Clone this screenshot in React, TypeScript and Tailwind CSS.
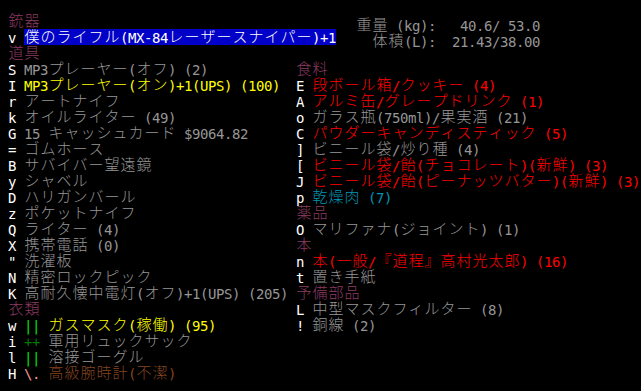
import React from "react";

// Cataclysm-style inventory screen, drawn on an 8px x 16px character grid
type Seg = [string, string];

const HDR = "text-[#8b3a62]";
const KEY = "text-white";
const GRY = "text-[#969696]";
const YEL = "text-[#ffff00]";
const RED = "text-[#ff0000]";
const CYN = "text-[#0096b4]";
const BRN = "text-[#84441f]";
const LGN = "text-[#00e600]";
const DGN = "text-[#007800]";
const PNK = "text-[#ff9696]";
const HL = "text-white bg-[#0000c8]";

const FULL = /[\u2E80-\u9FFF\uF900-\uFAFF\uFF01-\uFF60]/;

function Txt({ s, className }: { s: string; className: string }) {
  return (
    <span className={`flex ${className}`}>
      {Array.from(s).map((ch, i) =>
        FULL.test(ch) ? (
          <span key={i} className="inline-block w-4 h-4 shrink-0 text-center text-[15px] font-light leading-[17px]">
            {ch}
          </span>
        ) : (
          <span key={i} className="inline-block w-2 h-4 shrink-0 text-center text-[14px] leading-[18px]">
            {ch === " " ? "\u00a0" : ch}
          </span>
        )
      )}
    </span>
  );
}

function Row({ segs }: { segs: Seg[] }) {
  return (
    <div className="flex h-4 whitespace-nowrap">
      {segs.map(([s, c], i) => (
        <Txt key={i} s={s} className={c} />
      ))}
    </div>
  );
}

const left: Seg[][] = [
  [["銃器", HDR]],
  [["v ", KEY], ["僕のライフル(MX-84レーザースナイパー)+1", HL]],
  [["道具", HDR]],
  [["S ", KEY], ["MP3プレーヤー(オフ) (2)", GRY]],
  [["I ", KEY], ["MP3プレーヤー(オン)+1(UPS) (100)", YEL]],
  [["r ", KEY], ["アートナイフ", GRY]],
  [["k ", KEY], ["オイルライター (49)", GRY]],
  [["G ", KEY], ["15 キャッシュカード $9064.82", GRY]],
  [["= ", KEY], ["ゴムホース", GRY]],
  [["B ", KEY], ["サバイバー望遠鏡", GRY]],
  [["y ", KEY], ["シャベル", GRY]],
  [["D ", KEY], ["ハリガンバール", GRY]],
  [["z ", KEY], ["ポケットナイフ", GRY]],
  [["Q ", KEY], ["ライター (4)", GRY]],
  [["X ", KEY], ["携帯電話 (0)", GRY]],
  [['" ', KEY], ["洗濯板", GRY]],
  [["N ", KEY], ["精密ロックピック", GRY]],
  [["K ", KEY], ["高耐久懐中電灯(オフ)+1(UPS) (205)", GRY]],
  [["衣類", HDR]],
  [["w ", KEY], ["||", LGN], [" ", KEY], ["ガスマスク(稼働) (95)", YEL]],
  [["i ", KEY], ["++", DGN], [" ", KEY], ["軍用リュックサック", GRY]],
  [["l ", KEY], ["||", LGN], [" ", KEY], ["溶接ゴーグル", GRY]],
  [["H ", KEY], ["\\.", PNK], [" ", KEY], ["高級腕時計(不潔)", BRN]],
];

const right: Seg[][] = [
  [["食料", HDR]],
  [["E ", KEY], ["段ボール箱/クッキー (4)", RED]],
  [["A ", KEY], ["アルミ缶/グレープドリンク (1)", RED]],
  [["o ", KEY], ["ガラス瓶(750ml)/果実酒 (21)", GRY]],
  [["C ", KEY], ["パウダーキャンディスティック (5)", RED]],
  [["] ", KEY], ["ビニール袋/炒り種 (4)", GRY]],
  [["[ ", KEY], ["ビニール袋/飴(チョコレート)(新鮮) (3)", RED]],
  [["J ", KEY], ["ビニール袋/飴(ピーナッツバター)(新鮮) (3)", RED]],
  [["p ", KEY], ["乾燥肉 (7)", CYN]],
  [["薬品", HDR]],
  [["O ", KEY], ["マリファナ(ジョイント) (1)", GRY]],
  [["本", HDR]],
  [["n ", KEY], ["本(一般/『道程』高村光太郎) (16)", RED]],
  [["t ", KEY], ["置き手紙", GRY]],
  [["予備部品", HDR]],
  [["L ", KEY], ["中型マスクフィルター (8)", GRY]],
  [["! ", KEY], ["銅線 (2)", GRY]],
];

export default function App() {
  return (
    <div
      className="w-[641px] h-[391px] overflow-hidden bg-black pt-[13px] flex"
      style={{ fontFamily: '"DejaVu Sans Mono", "Noto Sans CJK JP", monospace' }}
    >
      <div className="w-[296px] shrink-0 pl-2 flex flex-col">
        {left.map((r, i) => (
          <Row key={i} segs={r} />
        ))}
      </div>
      <div className="flex-1 flex flex-col">
        <div className="h-12 pt-1 pl-[60px] flex flex-col">
          <Row segs={[["重量 (kg):   40.6/ 53.0", GRY]]} />
          <div className="pl-4">
            <Row segs={[["体積(L):  21.43/38.00", GRY]]} />
          </div>
        </div>
        {right.map((r, i) => (
          <Row key={i} segs={r} />
        ))}
      </div>
    </div>
  );
}
